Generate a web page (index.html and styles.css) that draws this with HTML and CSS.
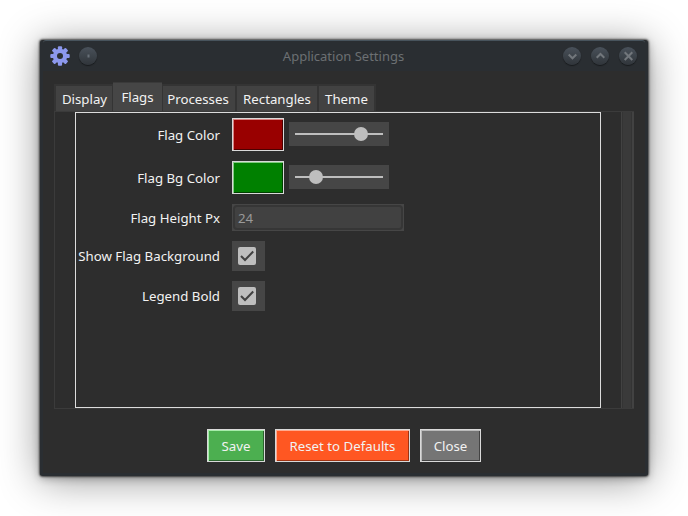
FILE: index.html
```html
<!DOCTYPE html>
<html lang="en">
<head>
<meta charset="utf-8">
<title>Application Settings</title>
<link rel="stylesheet" href="styles.css">
</head>
<body>
<main class="window">
  <header class="titlebar">
    <svg class="gear" width="20" height="20" viewBox="-10 -10 20 20">
      <g fill="#8c98ee">
        <rect x="-2.1" y="-9.7" width="4.2" height="19.4" rx="1"/>
        <rect x="-2.1" y="-9.7" width="4.2" height="19.4" rx="1" transform="rotate(45)"/>
        <rect x="-2.1" y="-9.7" width="4.2" height="19.4" rx="1" transform="rotate(90)"/>
        <rect x="-2.1" y="-9.7" width="4.2" height="19.4" rx="1" transform="rotate(135)"/>
        <circle r="7.2"/>
      </g>
      <circle r="3" fill="#2a2e32"/>
    </svg>
    <span class="orb"><svg width="17" height="17" viewBox="0 0 17 17"><rect x="7.5" y="7.5" width="2" height="3" fill="#687078"/></svg></span>
    <h1 class="title">Application Settings</h1>
    <span class="orb"><svg width="17" height="17" viewBox="0 0 17 17"><path d="M4.7 7.5L8.5 11.3L12.3 7.5"/></svg></span>
    <span class="orb"><svg width="17" height="17" viewBox="0 0 17 17"><path d="M4.7 10.8L8.5 7L12.3 10.8"/></svg></span>
    <span class="orb"><svg width="17" height="17" viewBox="0 0 17 17"><path d="M4.7 5.2L12.3 13M12.3 5.2L4.7 13"/></svg></span>
  </header>
  <nav class="tabs">
    <span class="tab display">Display</span>
    <span class="tab active">Flags</span>
    <span class="tab processes">Processes</span>
    <span class="tab rectangles">Rectangles</span>
    <span class="tab theme">Theme</span>
  </nav>
  <section class="pane">
    <div class="canvas">
      <div class="row"><span class="label">Flag Color</span><span class="swatch red"></span>
        <span class="slider"><svg width="100" height="24"><path d="M6 12H94"/><circle cx="72" cy="12" r="7"/></svg></span></div>
      <div class="row"><span class="label">Flag Bg Color</span><span class="swatch green"></span>
        <span class="slider"><svg width="100" height="24"><path d="M6 12H94"/><circle cx="27" cy="12" r="7"/></svg></span></div>
      <div class="row"><span class="label">Flag Height Px</span><span class="entry"><span class="value">24</span></span></div>
      <div class="row"><span class="label">Show Flag Background</span><span class="check"><svg width="18" height="18"><rect width="18" height="18" rx="2"/><path d="M3 9L7 13L15.2 4.5"/></svg></span></div>
      <div class="row"><span class="label">Legend Bold</span><span class="check"><svg width="18" height="18"><rect width="18" height="18" rx="2"/><path d="M3 9L7 13L15.2 4.5"/></svg></span></div>
    </div>
    <div class="scrollbar"></div>
  </section>
  <footer class="actions">
    <span class="button save">Save</span>
    <span class="button reset">Reset to Defaults</span>
    <span class="button close">Close</span>
  </footer>
</main>
</body>
</html>
```
FILE: styles.css
```css
* { box-sizing: border-box; }
body {
  margin: 0;
  height: 516px;
  padding: 40px;
  overflow: hidden;
  background: #fff;
  font: 13.25px/18px "Noto Sans", sans-serif;
  color: #f2f2f2;
}
.window {
  width: 608px;
  height: 436px;
  display: flex;
  flex-direction: column;
  background: #2d2d2d;
  border: solid #2a2e32;
  border-width: 0 3px 3px;
  border-radius: 3px;
  box-shadow: 0 0 2px 1px rgba(0,0,0,.6), 0 2px 8px rgba(0,0,0,.32), 0 4px 40px rgba(0,0,0,.42);
}
.titlebar {
  height: 31px;
  flex: none;
  display: flex;
  align-items: center;
  gap: 10px;
  padding: 0 8px 1px 7px;
  border-top: 1px solid #48545d;
  border-radius: 3px 3px 0 0;
  background: #2a2e32;
}
.gear { margin-right: -2px; }
.orb {
  width: 18px;
  height: 18px;
  padding: .5px;
  margin-right: 0;
  border-radius: 50%;
  background: linear-gradient(#49515a, #30353a);
  box-shadow: 0 1px 1px #17191c;
}
.gear + .orb { margin-left: 1px; }
.orb svg { display: block; fill: none; stroke: #72777c; stroke-width: 2; }
.orb rect { stroke: none; }
.title {
  flex: 1;
  margin: 0;
  padding-left: 27px;
  text-align: center;
  font-size: 13px;
  line-height: 18px;
  font-weight: 400;
  color: #6c7073;
}
.tabs {
  width: 322px;
  height: 40px;
  flex: none;
  margin-left: 11px;
  padding: 12px 0 0 2px;
  display: flex;
  align-items: flex-end;
  background: linear-gradient(#343434, #343434) 0 100% / 322px 27px no-repeat;
}
.tab {
  height: 25px;
  padding-top: 4px;
  text-align: center;
  background: #424242;
}
.display { width: 56px; padding-left: 1px; }
.active { width: 49px; height: 29px; padding-top: 5px; margin: 0 1px; background: #464646; border-top: 1px solid #3a3a3a; }
.processes { width: 72px; padding-right: 2px; }
.rectangles { width: 80px; margin: 0 2px; }
.theme { width: 55px; }
.pane {
  width: 580px;
  height: 298px;
  flex: none;
  margin-left: 11px;
  padding-left: 20px;
  display: flex;
  justify-content: space-between;
  border: 1px solid #3b3b3b;
  border-right: 0;
}
.canvas {
  width: 526px;
  height: 296px;
  padding-top: 5px;
  display: flex;
  flex-direction: column;
  gap: 10px;
  border: 1px solid #dcdcdc;
}
.row { display: flex; align-items: center; }
.label { width: 144px; margin-right: 12px; text-align: right; white-space: nowrap; }
.swatch {
  width: 52px;
  height: 33px;
  margin-right: 5px;
  border: 1px solid #d9d9d9;
}
.red { background: #900; box-shadow: inset 1px 1px #d78080, inset -1px -1px #4d0000; }
.green { background: #008000; box-shadow: inset 1px 1px #80ca80, inset -1px -1px #004000; }
.slider { width: 100px; height: 24px; margin-top: -1px; background: #464646; }
.slider svg { display: block; fill: #bebebe; stroke: none; }
.slider path { stroke: #bebebe; stroke-width: 2; }
.entry { width: 172px; height: 27px; padding: 1px; background: #464646; }
.value {
  display: block;
  height: 25px;
  padding: 2px 0 0 3px;
  border: 2px solid #363636;
  border-radius: 4px;
  background: #414141;
  color: #9a9a9a;
}
.check { width: 33px; height: 30px; padding: 6px; background: #464646; }
.check svg { display: block; fill: #bebebe; }
.check path { fill: none; stroke: #414141; stroke-width: 2; }
.scrollbar {
  width: 13px;
  background: #3a3a3a;
  border-left: 1px solid #424242;
  box-shadow: inset 1px 0 #343434, inset -2px 0 #424242, inset -3px 0 #343434;
}
.actions { display: flex; gap: 10px; margin: 20px 0 0 164px; }
.button {
  height: 33px;
  padding-top: 7px;
  text-align: center;
  border: 1px solid #d9d9d9;
}
.save { width: 58px; background: #4caf50; box-shadow: inset 1px 1px #a6ecaa, inset -1px -1px #2b642e; }
.reset { width: 135px; background: #ff5722; box-shadow: inset 1px 1px #ffab90, inset -1px -1px #a03412; }
.close { width: 61px; background: #757575; box-shadow: inset 1px 1px #bababa, inset -1px -1px #434343; }
```
